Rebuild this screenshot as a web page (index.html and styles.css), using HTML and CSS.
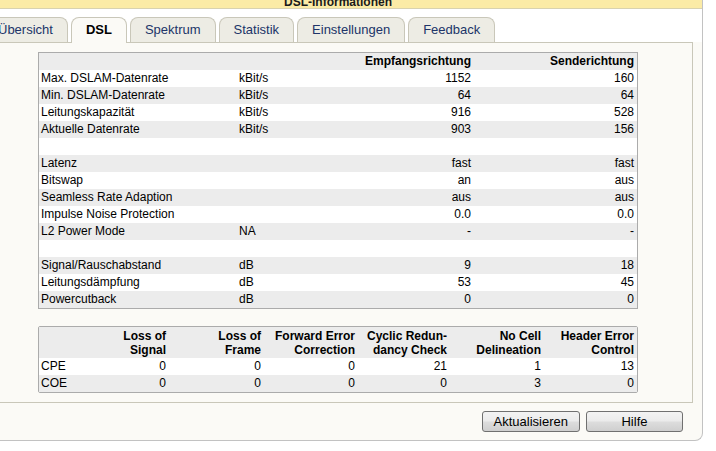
FILE: index.html
```html
<!DOCTYPE html>
<html lang="de">
<head>
<meta charset="utf-8">
<title>DSL-Informationen</title>
<link rel="stylesheet" href="styles.css">
</head>
<body>
<div class="window">
  <div class="title">DSL-Informationen</div>
  <div class="tabbar">
    <div class="tab">Übersicht</div>
    <div class="tab active">DSL</div>
    <div class="tab">Spektrum</div>
    <div class="tab">Statistik</div>
    <div class="tab">Einstellungen</div>
    <div class="tab">Feedback</div>
  </div>
  <div class="panel">
    <table class="grid info">
      <colgroup><col class="c-label"><col class="c-unit"><col class="c-down"><col class="c-up"></colgroup>
      <tr class="head"><th></th><th></th><th class="num">Empfangsrichtung</th><th class="num">Senderichtung</th></tr>
      <tr><td>Max. DSLAM-Datenrate</td><td>kBit/s</td><td class="num">1152</td><td class="num">160</td></tr>
      <tr><td>Min. DSLAM-Datenrate</td><td>kBit/s</td><td class="num">64</td><td class="num">64</td></tr>
      <tr><td>Leitungskapazität</td><td>kBit/s</td><td class="num">916</td><td class="num">528</td></tr>
      <tr><td>Aktuelle Datenrate</td><td>kBit/s</td><td class="num">903</td><td class="num">156</td></tr>
      <tr><td></td><td></td><td></td><td></td></tr>
      <tr><td>Latenz</td><td></td><td class="num">fast</td><td class="num">fast</td></tr>
      <tr><td>Bitswap</td><td></td><td class="num">an</td><td class="num">aus</td></tr>
      <tr><td>Seamless Rate Adaption</td><td></td><td class="num">aus</td><td class="num">aus</td></tr>
      <tr><td>Impulse Noise Protection</td><td></td><td class="num">0.0</td><td class="num">0.0</td></tr>
      <tr><td>L2 Power Mode</td><td>NA</td><td class="num">-</td><td class="num">-</td></tr>
      <tr><td></td><td></td><td></td><td></td></tr>
      <tr><td>Signal/Rauschabstand</td><td>dB</td><td class="num">9</td><td class="num">18</td></tr>
      <tr><td>Leitungsdämpfung</td><td>dB</td><td class="num">53</td><td class="num">45</td></tr>
      <tr><td>Powercutback</td><td>dB</td><td class="num">0</td><td class="num">0</td></tr>
    </table>
    <table class="grid errors">
      <colgroup><col class="e0"><col class="e1"><col class="e2"><col class="e3"><col class="e4"><col class="e5"><col class="e6"></colgroup>
      <tr class="head two">
        <th></th>
        <th class="num">Loss of<br>Signal</th>
        <th class="num">Loss of<br>Frame</th>
        <th class="num">Forward Error<br>Correction</th>
        <th class="num">Cyclic Redun-<br>dancy Check</th>
        <th class="num">No Cell<br>Delineation</th>
        <th class="num">Header Error<br>Control</th>
      </tr>
      <tr><td>CPE</td><td class="num">0</td><td class="num">0</td><td class="num">0</td><td class="num">21</td><td class="num">1</td><td class="num">13</td></tr>
      <tr><td>COE</td><td class="num">0</td><td class="num">0</td><td class="num">0</td><td class="num">0</td><td class="num">3</td><td class="num">0</td></tr>
    </table>
  </div>
  <div class="actions">
    <button class="btn" type="button">Aktualisieren</button>
    <button class="btn" type="button">Hilfe</button>
  </div>
</div>
</body>
</html>
```
FILE: styles.css
```css
html, body {
  margin: 0;
  padding: 0;
  background: #ffffff;
}

body {
  font-family: "Liberation Sans", Arial, sans-serif;
  color: #000;
  overflow: hidden;
}

.window {
  box-sizing: border-box;
  width: 730px;
  margin: -3px 0 0 -27px;
  border: 1px solid #c2c2c2;
  border-top: none;
  border-radius: 0 0 8px 8px;
  background: #fbfaf6;
}

.title {
  height: 11px;
  line-height: 11px;
  background: #fbeba6;
  border-bottom: 1px solid #d8d2b0;
  text-align: center;
  font-size: 12px;
  font-weight: bold;
  color: #1a1a1a;
  overflow: visible;
}

.tabbar {
  display: flex;
  gap: 3px;
  padding: 8px 9px 0;
  background: #ffffff;
}

.tab {
  height: 24px;
  line-height: 24px;
  padding: 0 14px;
  border: 1px solid #c9c7b9;
  border-bottom: none;
  border-radius: 8px 8px 0 0;
  background: #edece4;
  color: #203468;
  font-size: 13px;
  white-space: nowrap;
}

.tab.active {
  position: relative;
  z-index: 1;
  height: 25px;
  margin-bottom: -1px;
  background: #fbfaf6;
  color: #000;
  font-weight: bold;
}

.panel {
  margin: 0 9px;
  padding: 9px 0;
  border: 1px solid #c9c7b9;
  background: #fbfaf6;
}

.grid {
  width: 600px;
  margin: 0 auto;
  border-collapse: separate;
  border-spacing: 0;
  border: 1px solid #ababab;
  table-layout: fixed;
  font-size: 12px;
  background: #fff;
}

.grid + .grid {
  margin-top: 17px;
}

.grid td,
.grid th {
  height: 17px;
  line-height: 17px;
  padding: 0 3px 0 2px;
  text-align: left;
  white-space: nowrap;
  vertical-align: middle;
}

.grid th {
  font-weight: bold;
}

.grid tr:nth-child(odd) td,
.grid tr:nth-child(odd) th {
  background: #ececec;
}

.grid tr:nth-child(even) td {
  background: #ffffff;
}

.grid .num {
  text-align: right;
}

.c-label { width: 198px; }
.c-unit { width: 100px; }
.c-down { width: 137px; }
.c-up { width: 163px; }

.errors {
  border-radius: 2px;
}

.e0 { width: 36px; }
.e1 { width: 94px; }
.e2 { width: 95px; }
.e3 { width: 94px; }
.e4 { width: 92px; }
.e5 { width: 94px; }
.e6 { width: 93px; }

.grid tr.two th {
  height: 28px;
  line-height: 14px;
  padding-top: 2px;
  padding-bottom: 1px;
}

.actions {
  display: flex;
  justify-content: flex-end;
  gap: 6px;
  padding: 8px 19px 8px;
}

.btn {
  box-sizing: border-box;
  min-width: 97px;
  height: 21px;
  padding: 0 11px;
  border: 1px solid #707070;
  border-radius: 3px;
  background: linear-gradient(#f3f3f3 0%, #ebebeb 48%, #dddddd 52%, #cfcfcf 100%);
  font-family: "Liberation Sans", Arial, sans-serif;
  font-size: 13px;
  color: #000;
  line-height: 19px;
}
```
